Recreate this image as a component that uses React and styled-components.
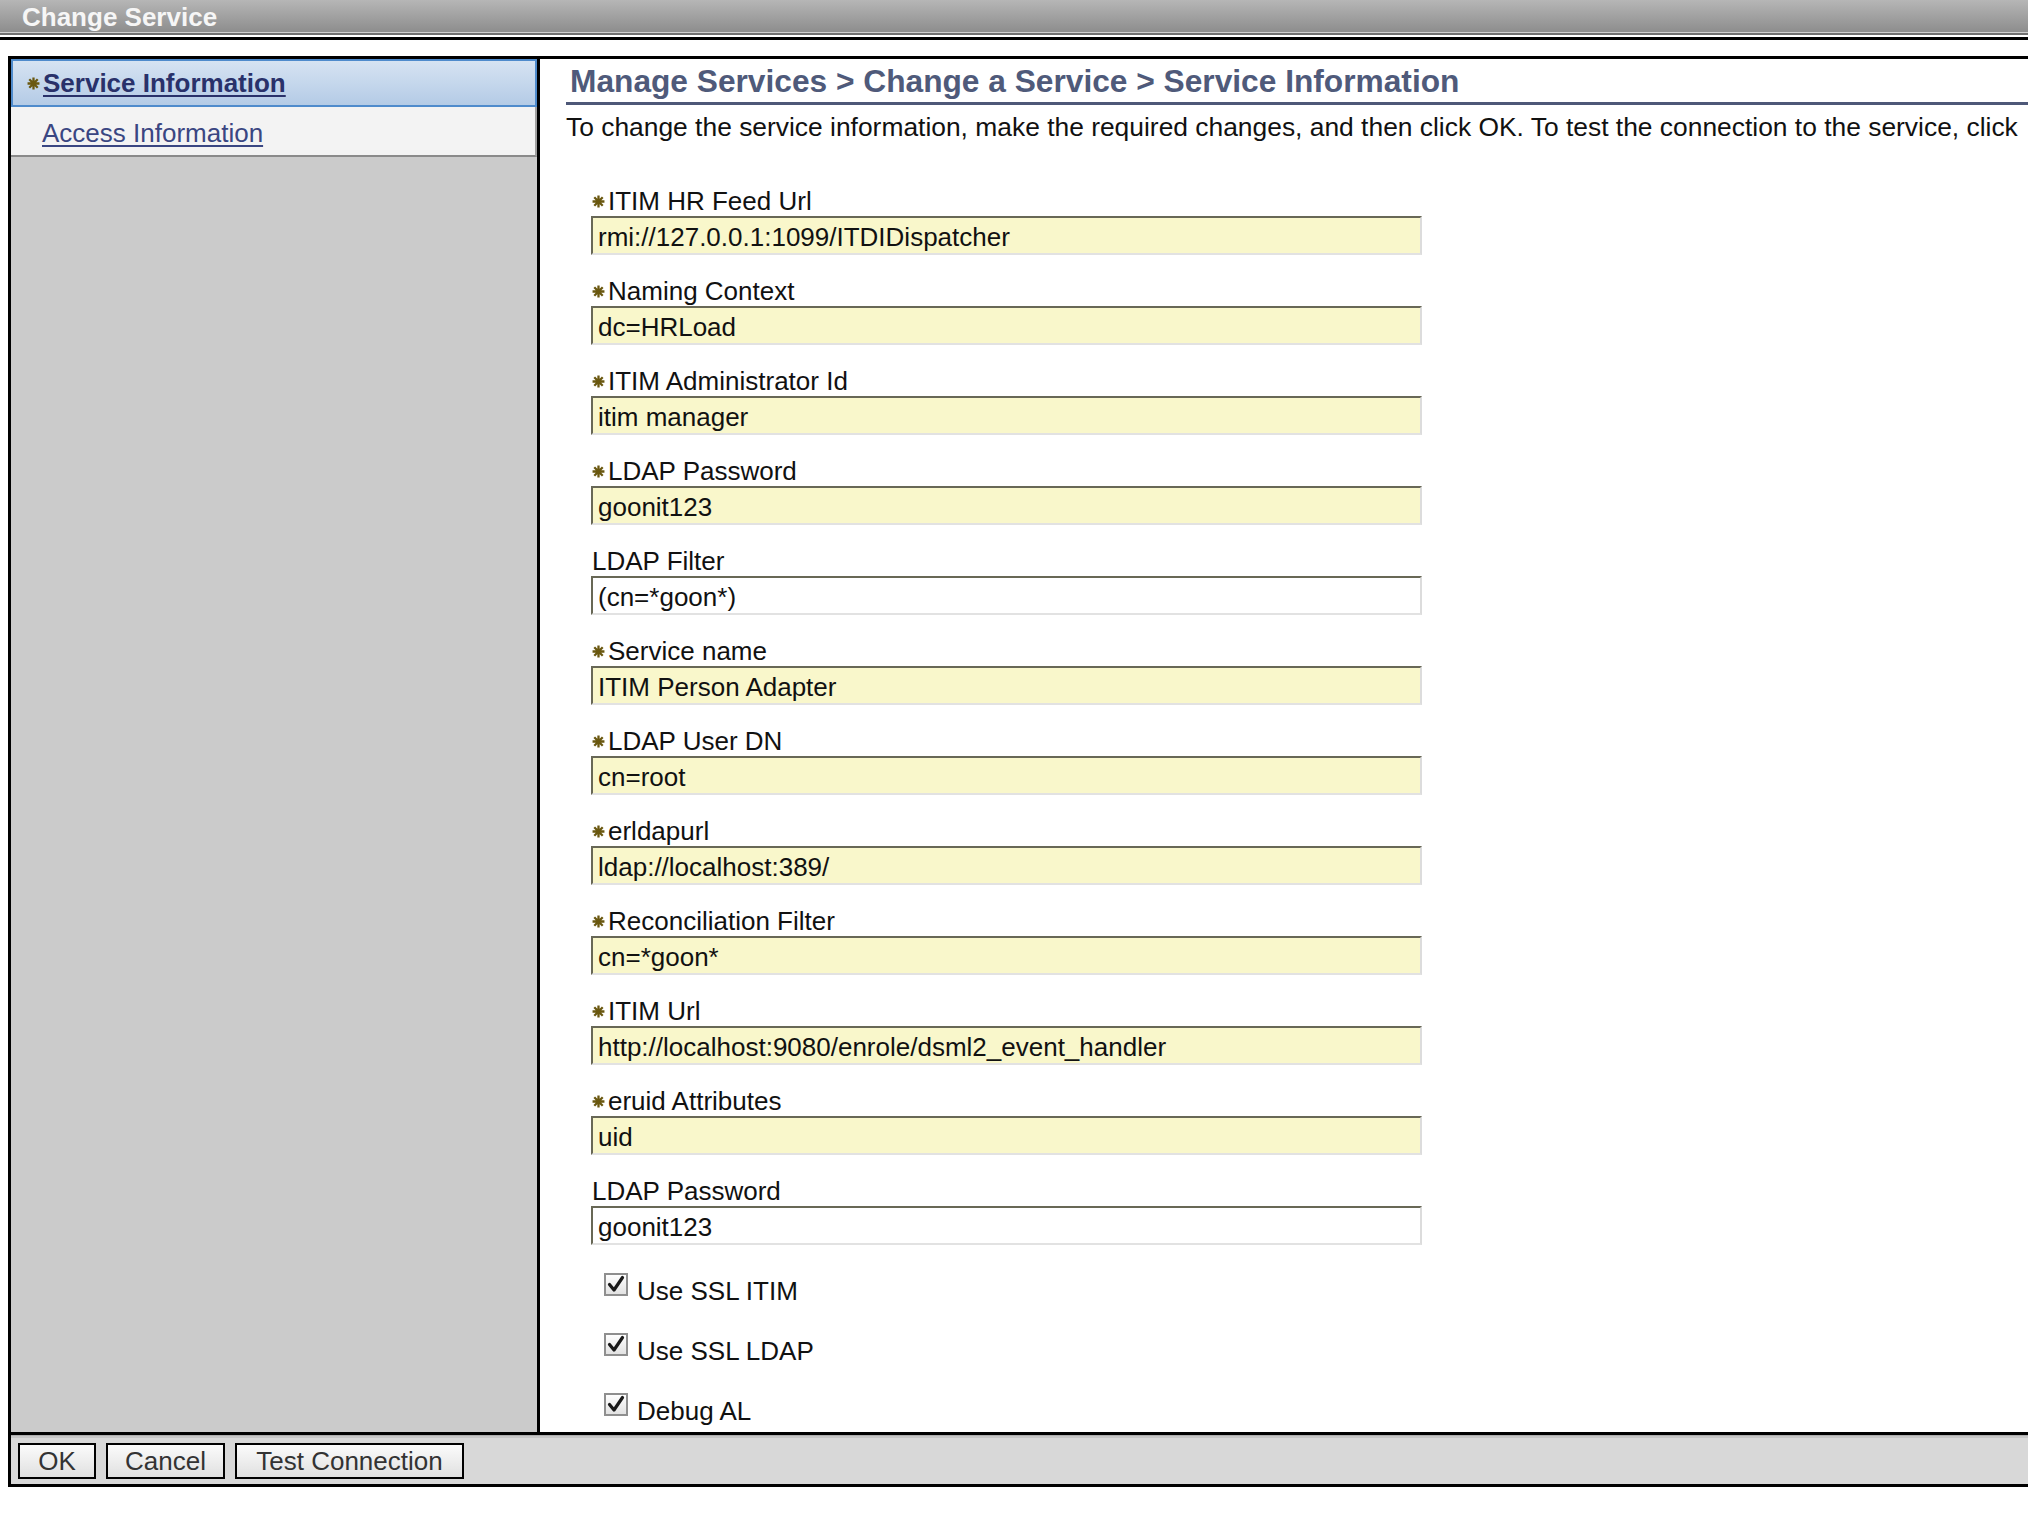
import styled, { createGlobalStyle } from "styled-components";

const fields = [
  { label: "ITIM HR Feed Url", value: "rmi://127.0.0.1:1099/ITDIDispatcher", required: true },
  { label: "Naming Context", value: "dc=HRLoad", required: true },
  { label: "ITIM Administrator Id", value: "itim manager", required: true },
  { label: "LDAP Password", value: "goonit123", required: true },
  { label: "LDAP Filter", value: "(cn=*goon*)", required: false },
  { label: "Service name", value: "ITIM Person Adapter", required: true },
  { label: "LDAP User DN", value: "cn=root", required: true },
  { label: "erldapurl", value: "ldap://localhost:389/", required: true },
  { label: "Reconciliation Filter", value: "cn=*goon*", required: true },
  { label: "ITIM Url", value: "http://localhost:9080/enrole/dsml2_event_handler", required: true },
  { label: "eruid Attributes", value: "uid", required: true },
  { label: "LDAP Password", value: "goonit123", required: false },
];

const options = ["Use SSL ITIM", "Use SSL LDAP", "Debug AL"];

const Star = () => (
  <StarIcon viewBox="0 0 12 12">
    <path d="M6 0.5v11M0.5 6h11M2.1 2.1l7.8 7.8M9.9 2.1l-7.8 7.8" />
  </StarIcon>
);

const App = () => {
  return (
    <>
      <GlobalStyle />
      <TitleBar>Change Service</TitleBar>
      <TitleRule />
      <Frame>
        <Body>
          <Nav>
            <NavItem $active>
              <Star />
              <NavLink $active>Service Information</NavLink>
            </NavItem>
            <NavItem>
              <NavLink>Access Information</NavLink>
            </NavItem>
          </Nav>

          <Main>
            <Heading>Manage Services &gt; Change a Service &gt; Service Information</Heading>
            <Intro>
              To change the service information, make the required changes, and then click OK. To
              test the connection to the service, click
            </Intro>

            <Fields>
              {fields.map((f, i) => (
                <Field key={i}>
                  <Label>
                    {f.required && <Star />}
                    {f.label}
                  </Label>
                  <Input readOnly value={f.value} $required={f.required} />
                </Field>
              ))}
            </Fields>

            <Options>
              {options.map((o) => (
                <CheckRow key={o}>
                  <CheckBox>
                    <svg viewBox="0 0 20 20" width="20" height="20">
                      <path d="M3.5 9.5l4.5 5.5 8.5-12.5" />
                    </svg>
                  </CheckBox>
                  <CheckText>{o}</CheckText>
                </CheckRow>
              ))}
            </Options>
          </Main>
        </Body>

        <ButtonBar>
          <Button $w={78}>OK</Button>
          <Button $w={119}>Cancel</Button>
          <Button $w={229}>Test Connection</Button>
        </ButtonBar>
      </Frame>
    </>
  );
};

const GlobalStyle = createGlobalStyle`
  html, body {
    margin: 0;
    padding: 0;
    background: #ffffff;
    overflow: hidden;
  }
  body {
    font-family: "Liberation Sans", Arial, sans-serif;
    color: #111111;
  }
`;

const TitleBar = styled.div`
  height: 32px;
  line-height: 34px;
  padding-left: 22px;
  background: linear-gradient(to bottom, #b6b6b6, #8d8d8d);
  color: #f6f6f6;
  font-size: 26px;
  font-weight: bold;
`;

const TitleRule = styled.div`
  height: 8px;
  background: linear-gradient(
    to bottom,
    #cfcfcf 0 1px,
    #707070 1px 3px,
    #ffffff 3px 5px,
    #000000 5px 8px
  );
`;

const Frame = styled.div`
  margin: 16px 0 0 8px;
  width: 2040px;
  border: 3px solid #000000;
  border-right: none;
`;

const Body = styled.div`
  display: flex;
  height: 1373px;
`;

const Nav = styled.div`
  width: 526px;
  flex-shrink: 0;
  background: #cbcbcb;
  border-right: 3px solid #000000;
`;

const NavItem = styled.div`
  display: flex;
  align-items: center;
  box-sizing: border-box;
  height: ${(p) => (p.$active ? "48px" : "50px")};
  padding-left: ${(p) => (p.$active ? "14px" : "31px")};
  padding-top: ${(p) => (p.$active ? "0" : "4px")};
  background: ${(p) =>
    p.$active ? "linear-gradient(to bottom, #d6e3f2, #b4cbe6)" : "#f3f3f3"};
  border: ${(p) => (p.$active ? "2px solid #4f8bcc" : "none")};
  border-bottom: ${(p) => (p.$active ? "2px solid #4f8bcc" : "2px solid #8a8a8a")};
  border-right: ${(p) => (p.$active ? "2px solid #4f8bcc" : "2px solid #a0a0a0")};
`;

const NavLink = styled.a`
  font-size: 26px;
  font-weight: ${(p) => (p.$active ? "bold" : "normal")};
  color: ${(p) => (p.$active ? "#29316a" : "#3a4682")};
  text-decoration: underline;
  text-underline-offset: 3px;
  cursor: pointer;
`;

const StarIcon = styled.svg`
  width: 13px;
  height: 13px;
  flex-shrink: 0;
  margin-right: 3px;
  stroke: #6a5810;
  stroke-width: 2.1;
  fill: none;
`;

const Main = styled.div`
  flex: 1;
  overflow: hidden;
  background: #ffffff;
`;

const Heading = styled.div`
  margin: 4px 0 0 26px;
  padding: 0 0 3px 4px;
  border-bottom: 3px solid #4e5878;
  font-size: 31.7px;
  line-height: 36px;
  font-weight: bold;
  color: #4f5a7a;
  white-space: nowrap;
`;

const Intro = styled.p`
  margin: 7px 0 0 26px;
  font-size: 26.4px;
  line-height: 30px;
  white-space: nowrap;
`;

const Fields = styled.div`
  margin: 43px 0 0 51px;
  display: flex;
  flex-direction: column;
`;

const Field = styled.div`
  display: flex;
  flex-direction: column;
  margin-bottom: 20px;
`;

const Label = styled.label`
  display: flex;
  align-items: center;
  height: 31px;
  padding-top: 2px;
  box-sizing: border-box;
  font-size: 26px;
  line-height: 31px;
  padding-left: 1px;
`;

const Input = styled.input`
  box-sizing: border-box;
  width: 831px;
  height: 39px;
  margin: 0;
  padding: 4px 0 0 5px;
  border: 2px solid;
  border-color: #686856 #dcdcdc #e2e2e2 #686856;
  background: ${(p) => (p.$required ? "#f9f7cb" : "#ffffff")};
  font-family: "Liberation Sans", Arial, sans-serif;
  font-size: 26px;
  color: #111111;
  outline: none;
`;

const Options = styled.div`
  display: flex;
  flex-direction: column;
  margin-left: 64px;
`;

const CheckRow = styled.div`
  display: flex;
  align-items: flex-start;
  gap: 9px;
  height: 60px;
  box-sizing: border-box;
  padding-top: 8px;
`;

const CheckBox = styled.span`
  display: flex;
  align-items: center;
  justify-content: center;
  box-sizing: border-box;
  width: 24px;
  height: 23px;
  border: 2px solid #8f8f8f;
  background: linear-gradient(to bottom, #ffffff, #e2e2e2);

  svg {
    fill: none;
    stroke: #1a1a1a;
    stroke-width: 3.2;
    stroke-linecap: round;
    stroke-linejoin: round;
  }
`;

const CheckText = styled.span`
  margin-top: 3px;
  font-size: 26px;
  line-height: 30px;
`;

const ButtonBar = styled.div`
  display: flex;
  gap: 10px;
  height: 52px;
  box-sizing: border-box;
  padding: 8px 0 0 7px;
  border-top: 3px solid #000000;
  background: linear-gradient(to bottom, #adadad 0 1px, #c6c6c6 1px 3px, #d8d8d8 3px);
`;

const Button = styled.button`
  box-sizing: border-box;
  width: ${(p) => p.$w}px;
  height: 36px;
  padding: 0;
  border: 2px solid #000000;
  background: linear-gradient(to bottom, #fbfbfb, #e0e0e0);
  font-family: "Liberation Sans", Arial, sans-serif;
  font-size: 26px;
  color: #333333;
  cursor: pointer;
`;

export default App;
